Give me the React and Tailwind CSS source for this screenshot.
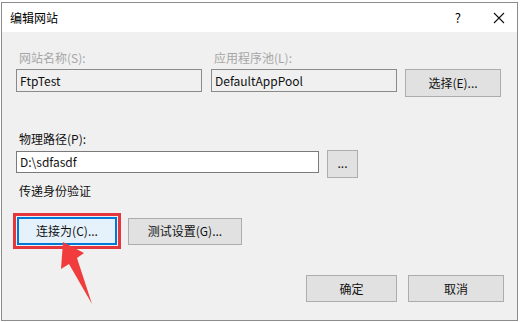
import React from 'react';

const font = { fontFamily: '"Noto Sans CJK SC", "Noto Sans", sans-serif' };

function WinButton({ children, className = '' }) {
  return (
    <div className={`flex items-center justify-center border border-[#adadad] bg-[#e1e1e1] text-[12px] text-[#111] ${className}`}>
      {children}
    </div>
  );
}

function App() {
  return (
    <div className="relative w-[520px] h-[322px] bg-white overflow-hidden" style={font}>
      <div className="ml-[1px] mt-[2px] w-[517px] h-[319px] border border-[#8c8c8c] flex flex-col">
        {/* Title bar */}
        <div className="h-[29px] bg-white flex items-center pl-[8px] pr-[12px]">
          <span className="text-[12px] text-black leading-none">编辑网站</span>
          <span className="ml-auto text-[13px] text-black leading-none">?</span>
          <svg className="ml-[32px]" width="12" height="12" viewBox="0 0 12 12">
            <path d="M1 1 L11 11 M11 1 L1 11" stroke="#111" strokeWidth="1.1" />
          </svg>
        </div>

        {/* Body */}
        <div className="flex-1 bg-[#f0f0f0] pl-[14px] pr-[13px] flex flex-col text-[12px]">
          <div className="mt-[18px] flex">
            <div className="w-[186px] leading-[16px] pl-[3px] text-[#a6a6a6]">网站名称(S):</div>
            <div className="ml-[9px] leading-[16px] pl-[3px] text-[#a6a6a6]">应用程序池(L):</div>
          </div>
          <div className="mt-[3px] flex items-start h-[28px]">
            <div className="w-[186px] h-[23px] border border-[#8a8a8a] bg-[#f0f0f0] flex items-center pl-[3px] text-[#111]">FtpTest</div>
            <div className="ml-[9px] w-[186px] h-[23px] border border-[#8a8a8a] bg-[#f0f0f0] flex items-center pl-[3px] text-[#111]">DefaultAppPool</div>
            <WinButton className="ml-[8px] w-[96px] h-[28px]">选择(E)...</WinButton>
          </div>

          <div className="mt-[34px] leading-[16px] pl-[3px] text-[#111]">物理路径(P):</div>
          <div className="mt-[3px] flex items-start">
            <div className="mt-[1px] w-[303px] h-[22px] border border-[#7a7a7a] bg-white flex items-center pl-[3px] text-[#111]">D:\sdfasdf</div>
            <WinButton className="ml-[8px] w-[31px] h-[28px] pb-[2px]">...</WinButton>
          </div>

          <div className="mt-[5px] leading-[16px] pl-[3px] text-[#111]">传递身份验证</div>

          <div className="mt-[14px] flex items-center">
            <div className="-ml-[3px] border-[3px] border-[#e5363d] p-[1px]">
              <div className="w-[100px] h-[28px] border-2 border-[#0078d7] bg-[#e5f1fb] flex items-center justify-center text-[#111]">连接为(C)...</div>
            </div>
            <WinButton className="ml-[7px] w-[114px] h-[27px]">测试设置(G)...</WinButton>
          </div>

          <div className="mt-[26px] flex justify-end">
            <WinButton className="w-[91px] h-[27px]">确定</WinButton>
            <WinButton className="ml-[11px] w-[96px] h-[27px]">取消</WinButton>
          </div>
        </div>
      </div>

      {/* red annotation arrow */}
      <svg className="absolute left-0 top-0 pointer-events-none" width="520" height="322" viewBox="0 0 520 322">
        <polygon points="63,242 84,253 77,258 92,304 69,264 61,269" fill="#f03c3c" />
      </svg>
    </div>
  );
}

export default App;
